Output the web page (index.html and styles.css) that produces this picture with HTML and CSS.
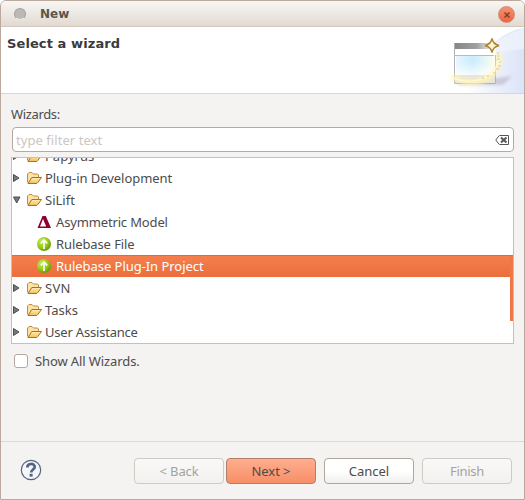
FILE: index.html
```html
<!DOCTYPE html>
<html lang="en">
<head>
<meta charset="utf-8">
<title>New</title>
<link rel="stylesheet" href="styles.css">
</head>
<body>
<svg class="defs" width="0" height="0" aria-hidden="true">
  <defs>
    <linearGradient id="gold" x1="0" y1="0" x2="0" y2="1"><stop offset="0" stop-color="#ffefb8"/><stop offset="1" stop-color="#f3be58"/></linearGradient>
    <radialGradient id="green" cx=".35" cy=".3" r=".75"><stop offset="0" stop-color="#c6ea62"/><stop offset=".55" stop-color="#9ccd1a"/><stop offset="1" stop-color="#5f9a08"/></radialGradient>
    <symbol id="folder" viewBox="0 0 16 16">
      <path d="M1.500 12.500V4L3 2.500h3L7.500 4h4l1 1v3" fill="#fbe3a6" stroke="#c48b3a"/>
      <path d="M2 13.500 5.800 7.500h9.700L11.800 12.500 10.800 13.500Z" fill="url(#gold)" stroke="#b36d16"/>
    </symbol>
    <symbol id="closed" viewBox="0 0 8 8"><path d="M.5.5v7l5.500-3.500Z" fill="#777" stroke="#505050"/></symbol>
    <symbol id="open" viewBox="0 0 8 8"><path d="M.5 1h6.500L3.700 7Z" fill="#777" stroke="#505050"/></symbol>
    <symbol id="up" viewBox="0 0 16 16">
      <circle cx="8" cy="8" r="7" fill="url(#green)"/>
      <path d="M8 13V4M4.800 7.300 8 4l3.200 3.300" fill="none" stroke="#f7fbe8" stroke-width="1.800"/>
    </symbol>
    <symbol id="delta" viewBox="0 0 16 16">
      <path fill-rule="evenodd" d="M6.500 2h3.300L15 14H1.500ZM7 5 4 12.500h6.200Z" fill="#94002e"/>
    </symbol>
  </defs>
</svg>
<main class="window">
  <header class="titlebar">
    <span class="knob"></span>
    <span class="title">New</span>
    <span class="close"><svg width="8" height="8" viewBox="0 0 8 8"><path d="M1.500 1.500l5 5m0-5l-5 5" stroke="#823d29" stroke-width="1.500"/></svg></span>
  </header>
  <section class="banner">
    <h1>Select a wizard</h1>
    <svg class="art" width="75" height="66" viewBox="449 27 75 66">
      <defs>
        <linearGradient id="sky" x1="0" y1="0" x2="1" y2="0"><stop offset="0" stop-color="#fff"/><stop offset="1" stop-color="#dbe3f7"/></linearGradient>
        <linearGradient id="bar" x1="0" y1="0" x2="1" y2="0"><stop offset="0" stop-color="#858585"/><stop offset=".6" stop-color="#a0a0a0"/><stop offset="1" stop-color="#eee"/></linearGradient>
        <linearGradient id="pane" x1="0" y1="0" x2="1" y2="0"><stop offset="0" stop-color="#e6f6ff"/><stop offset=".45" stop-color="#caecfd"/><stop offset="1" stop-color="#fafdf0"/></linearGradient>
        <linearGradient id="fade" x1="0" y1="0" x2="0" y2="1"><stop offset="0" stop-color="#fff" stop-opacity="0"/><stop offset="1" stop-color="#fff" stop-opacity=".8"/></linearGradient>
        <filter id="soft" x="-30%" y="-30%" width="160%" height="160%"><feGaussianBlur stdDeviation="1.800"/></filter>
      </defs>
      <path d="M466 93Q484 34 524 28V93Z" fill="url(#sky)"/>
      <path d="M488 55Q508 50 524 49V28Q499 36 488 55Z" fill="#f0f4fd" opacity=".7"/>
      <path d="M458 85h45l9-9-8 1-46 6Z" fill="#a6a0b5" opacity=".45" filter="url(#soft)"/>
      <rect x="454" y="43" width="42" height="41" fill="#fff"/>
      <rect x="454" y="43" width="38" height="6" fill="url(#bar)"/>
      <path d="M454.500 43v40.500h41V55" fill="none" stroke="#b0b1b3"/>
      <rect x="455" y="75" width="40" height="8" fill="#e8e5d8"/>
      <rect x="456" y="56" width="38" height="19" fill="url(#pane)"/>
      <rect x="456" y="62" width="38" height="13" fill="url(#fade)"/>
      <path d="M455 55.500h39" stroke="#b8bcc0"/>
      <path d="M452 76C467 88 501 84 499 53" fill="none" stroke="#fff6b4" stroke-width="6" opacity=".75" filter="url(#soft)"/>
      <path d="M453 78C470 86 499 80 500 53" fill="none" stroke="#fffbe0" stroke-width="1.500" opacity=".7"/>
      <path d="M498 52v2m-1 2h3m-3 3h3m-1 3h2m-3 4h3m-5 3h3m-6 4h3m-8 2v2m-5 0v2" stroke="#f2cc94" stroke-width="1.700" opacity=".8"/>
      <path d="M492 38.500Q493 44 499 45.500Q493 47 492 52.500Q491 47 485 45.500Q491 44 492 38.500Z" fill="#fff5cd" stroke="#ad8436" stroke-width="1.500"/>
    </svg>
  </section>
  <section class="content">
    <label class="label s-wizards">Wizards:</label>
    <div class="filter"><span class="s-filter">type filter text</span>
      <svg width="14" height="10" viewBox="0 0 14 10"><path d="M4.500.5h9v9h-9L3 8 .8 5 3 2Z" fill="#fff" stroke="#555"/><path d="M6 2.500l5.500 5m0-5L6 7.500" stroke="#555" stroke-width="2"/></svg>
    </div>
    <div class="tree">
      <div class="rows">
        <div class="row"><svg class="arrow"><use href="#closed"/></svg><svg class="icon"><use href="#folder"/></svg><span class="s-papyrus">Papyrus</span></div>
        <div class="row"><svg class="arrow"><use href="#closed"/></svg><svg class="icon"><use href="#folder"/></svg><span class="s-plugin">Plug-in Development</span></div>
        <div class="row"><svg class="arrow"><use href="#open"/></svg><svg class="icon"><use href="#folder"/></svg><span class="s-silift">SiLift</span></div>
        <div class="row child"><svg class="icon"><use href="#delta"/></svg><span class="s-asym">Asymmetric Model</span></div>
        <div class="row child"><svg class="icon"><use href="#up"/></svg><span class="s-file">Rulebase File</span></div>
        <div class="row child selected"><svg class="icon"><use href="#up"/></svg><span class="s-project">Rulebase Plug-In Project</span></div>
        <div class="row"><svg class="arrow"><use href="#closed"/></svg><svg class="icon"><use href="#folder"/></svg><span class="s-svn">SVN</span></div>
        <div class="row"><svg class="arrow"><use href="#closed"/></svg><svg class="icon"><use href="#folder"/></svg><span class="s-tasks">Tasks</span></div>
        <div class="row"><svg class="arrow"><use href="#closed"/></svg><svg class="icon"><use href="#folder"/></svg><span class="s-user">User Assistance</span></div>
      </div>
      <span class="scrollbar"></span>
    </div>
    <div class="option"><span class="checkbox"></span><span class="s-show">Show All Wizards.</span></div>
  </section>
  <footer class="footer">
    <svg class="help" width="22" height="22" viewBox="0 0 22 22"><circle cx="11" cy="11" r="9.700" fill="#f5f6f8" stroke="#536582" stroke-width="1.200"/><path d="M7.300 8.500C7.300 3.800 15 3.900 14.700 8.200c-.2 2.300-3.500 2.400-3.500 5.300" fill="none" stroke="#536582" stroke-width="2.700"/><rect x="9.600" y="14.800" width="3" height="2.800" fill="#536582"/></svg>
    <div class="buttons">
      <span class="button disabled"><span class="s-back">&lt; Back</span></span>
      <span class="button primary"><span class="s-next">Next &gt;</span></span>
      <span class="button"><span class="s-cancel">Cancel</span></span>
      <span class="button disabled"><span class="s-finish">Finish</span></span>
    </div>
  </footer>
</main>
</body>
</html>
```
FILE: styles.css
```css
* { box-sizing: border-box; }
body { margin: 0; background: #fff; font: 13px/22px "Noto Sans", "Open Sans", sans-serif; color: #4c4c4c; }
.defs { display: block; height: 0; }
svg { flex: none; }
.window { width: 525px; height: 500px; display: flex; flex-direction: column; border: 1px solid #baa99c; border-radius: 6px 6px 0 0; background: #f4f3f1; overflow: hidden; white-space: nowrap; }
.titlebar { height: 26px; flex: none; display: flex; align-items: center; padding: 0 9px 0 13px; border-bottom: 1px solid #d3c6bb; background: linear-gradient(#f8f6f4, #e1dad2); }
.knob { width: 12px; height: 12px; border-radius: 50%; background: #bbb8b5; border: 1px solid #a5a29f; border-bottom-color: #efedea; }
.title { margin-left: 14px; font: bold 12px/24px "DejaVu Sans", sans-serif; color: #5b554d; }
.close { width: 17px; height: 17px; margin-left: auto; margin-top: 2px; display: flex; align-items: center; justify-content: center; border-radius: 50%; background: linear-gradient(#f59272, #eb6540); border: 1px solid #d28b76; }
.banner { height: 67px; flex: none; display: flex; justify-content: space-between; background: #fff; border-bottom: 1px solid #d9d7d5; }
.banner h1 { margin: 6px 0 0 6px; font: bold 13px/21px "DejaVu Sans", sans-serif; letter-spacing: .1px; color: #3b3b3b; }
.content { flex: 1; padding: 9px 10px 0; display: flex; flex-direction: column; }
.label { height: 24px; }
.filter { height: 25px; display: flex; align-items: center; justify-content: space-between; margin-left: 1px; padding: 0 4px 0 3px; border: 1px solid #b5a9a0; border-radius: 4px; background: #fff; color: #cdc6bf; }
.tree { position: relative; height: 187px; margin-top: 5px; border: 1px solid #c5c0ba; background: #fff; overflow: hidden; }
.rows { margin-top: -13px; }
.row { height: 22px; display: flex; align-items: center; }
.row.child { padding-left: 24px; }
.row.selected { color: #fff; box-shadow: inset 0 1px #de6c3c; background: linear-gradient(#f4804e, #eb6e3c); }
.arrow { width: 8px; height: 8px; margin: 0 5px 0 1px; }
.icon { width: 16px; height: 16px; }
.row > span { margin-left: 3px; }
.row.child > span { margin-left: 4px; }
.scrollbar { position: absolute; right: 0; top: 98px; width: 3px; height: 65px; background: #f07746; }
.option { display: flex; align-items: center; margin: 6px 0 0 3px; }
.checkbox { width: 14px; height: 14px; margin-right: 7px; border: 1px solid #b6a69c; border-radius: 3px; background: #fff; }
.footer { height: 58px; flex: none; display: flex; justify-content: space-between; align-items: center; padding: 0 12px 0 19px; border-top: 1px solid #dedbd7; }
.help { margin-top: -2px; }
.buttons { display: flex; gap: 8px; }
.button { width: 90px; height: 26px; display: flex; align-items: center; justify-content: center; border: 1px solid #b2a79e; border-radius: 4px; background: linear-gradient(#fff 50%, #f0efed); }
.button.disabled { color: #a5a29f; border-color: #d0cac4; background: linear-gradient(#faf9f9, #f2f1ee); }
.button.primary { margin-left: -6px; border-color: #b28069; background: linear-gradient(#ffad8f, #f68f67); }
.s-wizards { letter-spacing: -.35px; }
.s-filter { letter-spacing: .06px; }
.s-plugin, .s-project { letter-spacing: -.05px; }
.s-asym { letter-spacing: -.15px; }
.s-file, .s-show { letter-spacing: -.1px; }
.s-svn { letter-spacing: .3px; }
.s-user { letter-spacing: -.2px; }
.s-back { letter-spacing: -.1px; }
.s-next { letter-spacing: -.05px; }
.s-finish { letter-spacing: -.3px; }
```
